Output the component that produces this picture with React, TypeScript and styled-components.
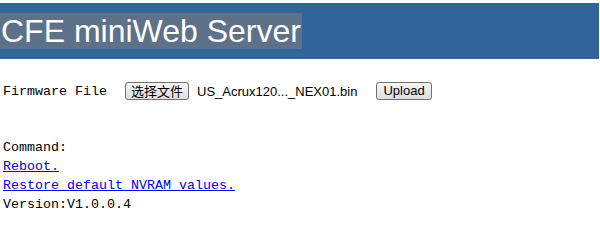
import React from 'react';
import styled, { createGlobalStyle } from 'styled-components';

const GlobalStyle = createGlobalStyle`
    html, body {
        margin: 0;
        padding: 0;
        background: #fff;
    }
    body {
        font-family: "Liberation Mono", "Noto Sans CJK SC", monospace;
        font-size: 13.33px;
        color: #000;
    }
`;

const App = () => {
    return (
        <>
            <GlobalStyle />
            <Header>
                <Title>CFE miniWeb Server</Title>
            </Header>
            <Content>
                <FormRow>
                    <Label>Firmware File</Label>
                    <PushButton cjk>选择文件</PushButton>
                    <FileName>US_Acrux120..._NEX01.bin</FileName>
                    <PushButton>Upload</PushButton>
                </FormRow>
                <Commands>
                    <Line>Command:</Line>
                    <Line><Link href="#">Reboot.</Link></Line>
                    <Line><Link href="#">Restore default NVRAM values.</Link></Line>
                    <Line>Version:V1.0.0.4</Line>
                </Commands>
            </Content>
        </>
    );
};

export default App;

const Header = styled.div`
    margin-top: 3px;
    width: 599px;
    height: 56px;
    display: flex;
    align-items: center;
    background-color: #31649a;
`;

const Title = styled.span`
    padding: 1px 1px 0 1px;
    font-family: "Liberation Sans", Arial, sans-serif;
    font-size: 32px;
    line-height: 35px;
    color: #fff;
    background-color: #5d7189;
`;

const Content = styled.div`
    padding: 0 3px;
`;

const FormRow = styled.div`
    display: flex;
    align-items: center;
    margin-top: 23px;
    height: 18px;
`;

const Label = styled.span`
    margin-right: 18px;
`;

const PushButton = styled.button<{ cjk?: boolean }>`
    height: 18px;
    padding: 0 ${({ cjk }) => (cjk ? '5px' : '6px')};
    font-family: ${({ cjk }) =>
        cjk ? '"Noto Sans CJK SC", sans-serif' : '"Liberation Sans", Arial, sans-serif'};
    font-size: 13px;
    line-height: 16px;
    color: #000;
    background: linear-gradient(#f6f6f6, #dedede);
    border: 1px solid #707070;
    border-radius: 3px;
`;

const FileName = styled.span`
    margin: 0 19px 0 8px;
    font-family: "Liberation Sans", Arial, sans-serif;
    font-size: 13px;
`;

const Commands = styled.div`
    margin-top: 38px;
`;

const Line = styled.div`
    line-height: 19px;
`;

const Link = styled.a`
    color: #0000ee;
    text-decoration: underline;
`;
